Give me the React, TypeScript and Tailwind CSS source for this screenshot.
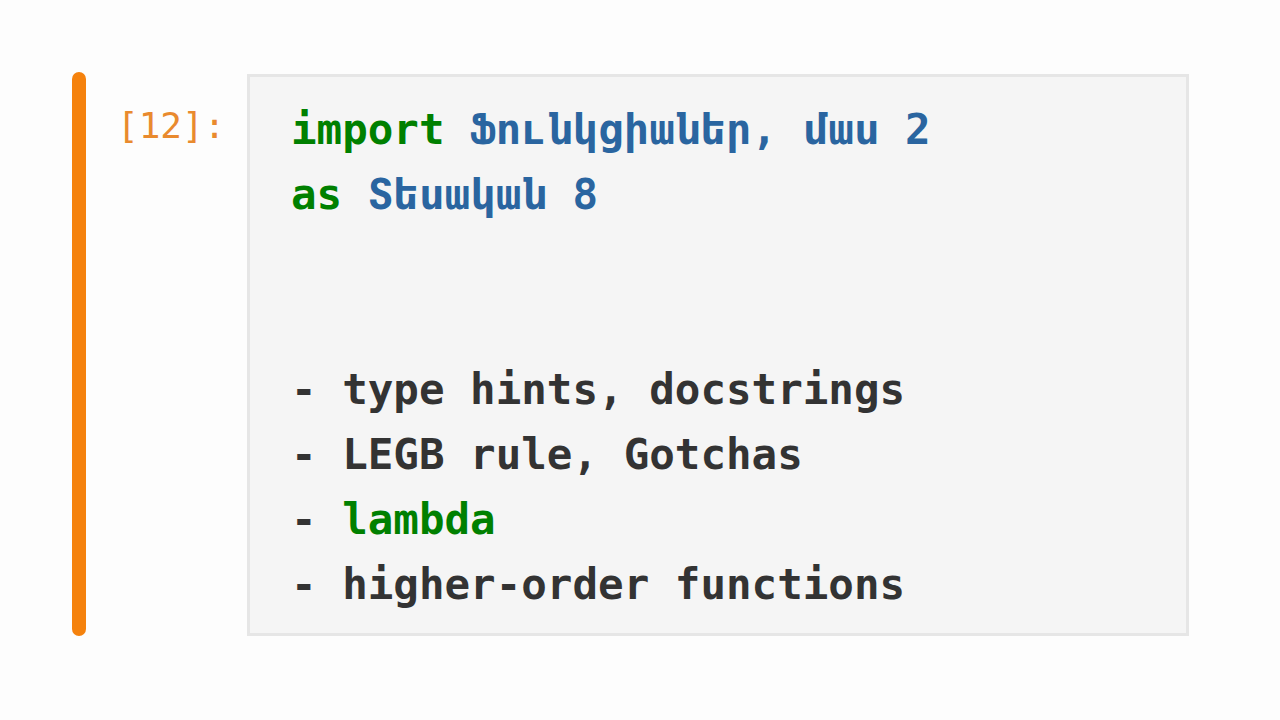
export default function App() {
  const mono = "font-['DejaVu_Sans_Mono','Liberation_Mono',monospace]";
  return (
    <div className="w-[1280px] h-[720px] bg-[#fdfdfd] flex items-start pt-[72px] pl-[72px]">
      <div className="w-[14px] h-[564px] rounded-full bg-[#f5820d]" />
      <div
        className={`w-[161px] pl-[31px] pt-[34px] text-[36px] leading-[40px] text-[#e98a2e] ${mono}`}
      >
        [12]:
      </div>
      <div
        className={`w-[942px] h-[562px] mt-[2px] bg-[#f5f5f5] border-[3px] border-[#e6e6e6] pl-[41px] pt-[20px] text-[42.5px] leading-[65px] font-bold text-[#333333] whitespace-pre ${mono}`}
      >
        <div>
          <span className="text-[#008000]">import</span>{" "}
          <span className="text-[#2a65a0]">Ֆունկցիաներ, մաս 2</span>
        </div>
        <div>
          <span className="text-[#008000]">as</span>{" "}
          <span className="text-[#2a65a0]">Տեսական 8</span>
        </div>
        <div>&nbsp;</div>
        <div>&nbsp;</div>
        <div>- type hints, docstrings</div>
        <div>- LEGB rule, Gotchas</div>
        <div>
          - <span className="text-[#008000]">lambda</span>
        </div>
        <div>- higher-order functions</div>
      </div>
    </div>
  );
}
